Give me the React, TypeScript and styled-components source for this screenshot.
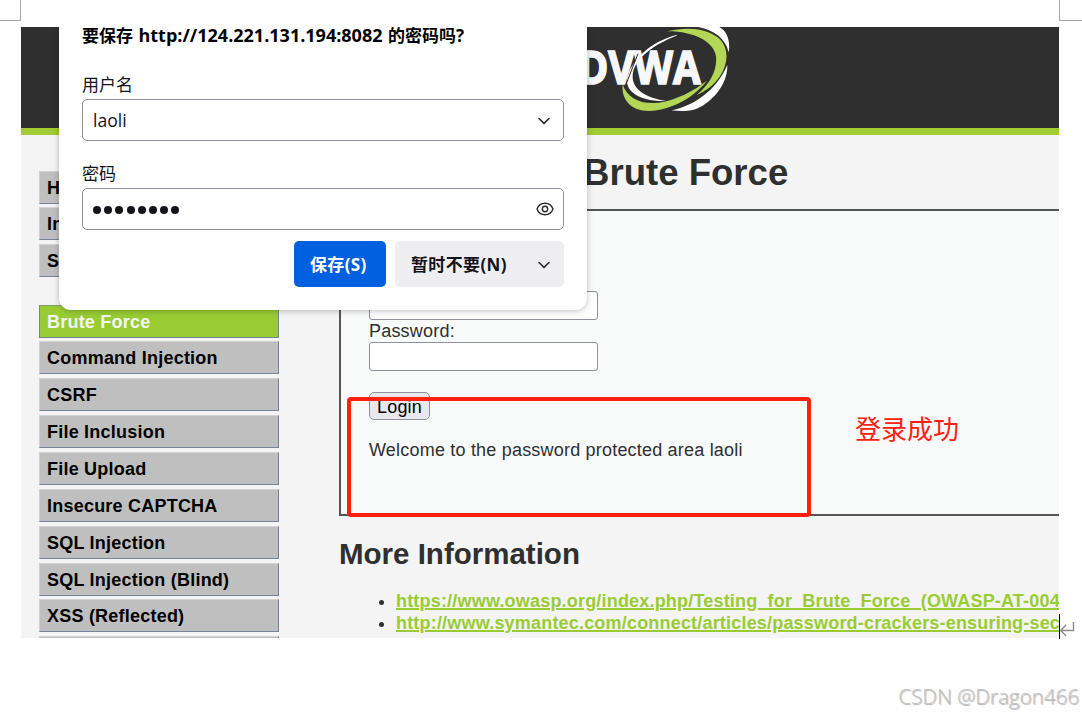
import React from 'react';
import styled, { createGlobalStyle } from 'styled-components';

const GlobalStyle = createGlobalStyle`
  * {
    box-sizing: border-box;
  }
  body {
    margin: 0;
    background: #FFFFFF;
    font-family: "Liberation Sans", "Noto Sans CJK SC", sans-serif;
  }
`
const Page = styled.div`
  display: flex;
  flex-direction: column;
  width: 1082px;
  height: 714px;
  overflow: hidden;
`
const CropMarks = styled.div`
  display: flex;
  justify-content: space-between;
  height: 27px;
`
const CropMark = styled.div<{ side: 'left' | 'right' }>`
  width: ${(props) => props.side === 'left' ? 21 : 23}px;
  height: 21px;
  border-bottom: 1px solid #A6A6A6;
  border-${(props) => props.side === 'left' ? 'right' : 'left'}: 1px solid #A6A6A6;
`
const Row = styled.div`
  display: flex;
  padding-left: 21px;
`
const Site = styled.div`
  position: relative;
  width: 1038px;
  height: 611px;
  overflow: hidden;
  background: #F4F4F4;
`
const Header = styled.div`
  height: 108px;
  padding-left: 549px;
  background: #2F2F2F;
  border-bottom: 7px solid #A1CC33;
`
const Columns = styled.div`
  display: flex;
`
const Sidebar = styled.div`
  flex: none;
  width: 318px;
  padding: 35.6px 60px 0 18px;
`
const MenuGroup = styled.div`
  display: flex;
  flex-direction: column;
  gap: 3.86px;
  margin-bottom: 27.2px;
`
const MenuItem = styled.div<{ selected?: boolean }>`
  flex: none;
  height: 33px;
  padding-left: 7px;
  border: 1px solid;
  border-color: ${(props) => props.selected ? '#7F9A6A #6F8796 #6F8796 #6F8796' : '#D2D2D2 #76849A #76849A #CFCFCF'};
  background: ${(props) => props.selected ? '#99CC33' : '#BFBFBF'};
  color: ${(props) => props.selected ? '#F4F4F4' : '#000000'};
  font-weight: bold;
  font-size: 18px;
  line-height: 32px;
  letter-spacing: 0.22px;
  white-space: nowrap;
`
const Main = styled.div`
  flex: 1;
  min-width: 0;
  overflow: hidden;
`
const Title = styled.h1`
  margin: 0;
  height: 74px;
  padding-left: 244px;
  color: #2F2F2F;
  font-size: 36.6px;
  line-height: 76px;
  white-space: nowrap;
`
const Panel = styled.div`
  display: flex;
  flex-direction: column;
  align-items: flex-start;
  height: 307px;
  padding: 80px 28px 0;
  border: 2px solid #555555;
  border-right: 0;
  background: #F8FAF9;
  color: #2F2F2F;
  font-size: 18px;
  line-height: 21px;
  letter-spacing: 0.2px;
`
const Field = styled.div`
  width: 229px;
  height: 29px;
  border: 1px solid #8F8F9D;
  border-radius: 3px;
  background: #FFFFFF;
`
const Label = styled.div`
  height: 22px;
  line-height: 23px;
`
const LoginButton = styled.div`
  width: 61px;
  height: 28px;
  margin: 21px 0 20px;
  border: 1px solid #8F8F9D;
  border-radius: 5px;
  background: #E9E9ED;
  color: #000000;
  line-height: 29px;
  text-align: center;
`
const SubTitle = styled.h2`
  margin: 0;
  padding-top: 20px;
  height: 74px;
  color: #2F2F2F;
  font-size: 29.5px;
  line-height: 36px;
`
const Links = styled.ul`
  margin: 0;
  padding-left: 57px;
  color: #2F2F2F;
  font-size: 18px;
  line-height: 22px;
  white-space: nowrap;
`
const Link = styled.span`
  color: #99CC33;
  font-weight: bold;
  letter-spacing: 0.19px;
  text-decoration: underline;
  text-decoration-thickness: 2px;
`
const Highlight = styled.div`
  position: absolute;
  left: 326px;
  top: 370px;
  width: 464px;
  height: 120px;
  border: 4px solid #FF2010;
  border-radius: 4px;
`
const Note = styled.div`
  position: absolute;
  left: 834px;
  top: 381px;
  color: #FF2010;
  font-family: "Noto Sans CJK SC", sans-serif;
  font-size: 26px;
  line-height: 40px;
`
const Popup = styled.div`
  position: absolute;
  left: 38px;
  top: 0;
  width: 528px;
  height: 283px;
  padding: 0 23px;
  border-radius: 0 0 12px 12px;
  background: #FFFFFF;
  box-shadow: 0 1px 6px rgba(0, 0, 0, 0.25);
  color: #15141A;
  font-family: "Open Sans", "Noto Sans CJK SC", sans-serif;
  font-size: 17px;
`
const Question = styled.div`
  height: 46px;
  color: #000000;
  font-weight: bold;
  line-height: 16px;
  white-space: nowrap;
`
const Address = styled.span`
  font-size: 18px;
  margin: 0 1px;
`
const PopupLabel = styled.div`
  height: 26px;
  line-height: 24px;
`
const PopupField = styled.div`
  display: flex;
  align-items: center;
  justify-content: space-between;
  width: 482px;
  height: 42px;
  margin-bottom: 21px;
  padding: 0 12px 0 10px;
  border: 1px solid #8F8F9D;
  border-radius: 5px;
`
const UserName = styled.span`
  font-size: 17.6px;
`
const Fields = styled.div`
  height: 168px;
`
const Dots = styled.div`
  display: flex;
  gap: 3.2px;
  padding-top: 1px;
`
const Dot = styled.div`
  width: 8px;
  height: 8px;
  border-radius: 50%;
  background: #15141A;
`
const Buttons = styled.div`
  display: flex;
  justify-content: flex-end;
  gap: 9px;
`
const PopupButton = styled.div<{ primary?: boolean }>`
  display: flex;
  align-items: center;
  justify-content: space-between;
  width: ${(props) => props.primary ? 92 : 169}px;
  height: 46px;
  padding: 0 ${(props) => props.primary ? 15 : 13}px 1px 16px;
  border-radius: 5px;
  background: ${(props) => props.primary ? '#0060DF' : '#EEEEF1'};
  color: ${(props) => props.primary ? '#FFFFFF' : '#15141A'};
  font-weight: bold;
  letter-spacing: 0.35px;
  white-space: nowrap;
`
const Cursor = styled.div`
  display: flex;
  align-items: flex-end;
  height: 612px;
`
const Caret = styled.div`
  width: 1px;
  height: 25px;
  background: #000000;
`
const Watermark = styled.div`
  margin-top: 42px;
  padding-right: 3px;
  color: #C3C3C3;
  font-family: "Open Sans", sans-serif;
  font-weight: 300;
  font-size: 20.6px;
  line-height: 30px;
  text-align: right;
  text-shadow: 1px 1px 1px #B0B0B0;
`
const pages = ['Home', 'Instructions', 'Setup'];
const attacks = [
  'Brute Force', 'Command Injection', 'CSRF', 'File Inclusion', 'File Upload',
  'Insecure CAPTCHA', 'SQL Injection', 'SQL Injection (Blind)', 'XSS (Reflected)', ''
];
const links = [
  'https://www.owasp.org/index.php/Testing_for_Brute_Force_(OWASP-AT-004)',
  'http://www.symantec.com/connect/articles/password-crackers-ensuring-security'
];

const Logo = () => (
  <svg width="160" height="100" viewBox="0 36 480 300" style={{ display: 'block' }}>
    <path d="M320 60C255 76 195 120 174 180C158 226 205 260 288 258C225 248 185 222 188 180C192 130 255 86 320 62Z" fill="#FFFFFF" />
    <path d="M385 36H448C470 48 482 75 476 112C466 70 435 47 385 36Z" fill="#FFFFFF" />
    <path d="M472 150C473 195 445 243 398 272C370 289 340 290 304 286C370 273 438 228 472 150Z" fill="#FFFFFF" />
    <text x="26" y="207" textLength="366" lengthAdjust="spacingAndGlyphs" fill="#F7F8FB" stroke="#F7F8FB" strokeWidth="5" fontFamily="Open Sans" fontWeight="700" fontSize="137">DVWA</text>
    <path d="M204 116L168 208" stroke="#2F2F2F" strokeWidth="3" />
    <path d="M292 49C350 34 410 40 443 67C478 96 476 145 450 184C431 212 407 229 380 240C425 203 442 160 438 124C432 80 370 48 292 49Z" fill="#B4D657" />
    <path d="M158 207C170 250 215 270 266 263C320 255 370 228 411 197C370 250 300 286 237 288C182 288 153 253 158 207Z" fill="#B4D657" />
  </svg>
)
const Chevron = () => (
  <svg width="14" height="14" viewBox="0 0 14 14" fill="none" stroke="#2B2A33" strokeWidth="1.6" strokeLinecap="round" strokeLinejoin="round">
    <path d="M2 5.5L7 10.3L12 5.5" />
  </svg>
)
const Eye = () => (
  <svg width="18" height="14" viewBox="0 0 18 14" fill="none" stroke="#2B2A33" strokeWidth="1.4" style={{ marginRight: -3 }}>
    <path d="M1 7C2.3 3.5 5.3 1.2 9 1.2S15.7 3.5 17 7C15.7 10.5 12.7 12.8 9 12.8S2.3 10.5 1 7Z" />
    <circle cx="9" cy="7" r="2.7" />
  </svg>
)
const ReturnMark = () => (
  <svg width="15" height="17" viewBox="0 0 15 17" fill="none" stroke="#8C8C8C" strokeWidth="1.4">
    <path d="M13.5 0V8.5H0.8M6 3L0.8 8.5L6 14" />
  </svg>
)

const SavePassword = () => (
  <Popup>
    <Question>要保存 <Address>http://124.221.131.194:8082</Address> 的密码吗?</Question>
    <Fields>
      <PopupLabel>用户名</PopupLabel>
      <PopupField>
        <UserName>laoli</UserName>
        <Chevron />
      </PopupField>
      <PopupLabel>密码</PopupLabel>
      <PopupField>
        <Dots>
          { Array.from({ length: 8 }, (_, i) => <Dot key={i} />) }
        </Dots>
        <Eye />
      </PopupField>
    </Fields>
    <Buttons>
      <PopupButton primary>保存(S)</PopupButton>
      <PopupButton>
        <span>暂时不要(N)</span>
        <Chevron />
      </PopupButton>
    </Buttons>
  </Popup>
)

export default class App extends React.Component {
  render() {
    const pageItems = pages.map((name) => <MenuItem key={name}>{ name }</MenuItem>);
    const attackItems = attacks.map((name, i) => (
      <MenuItem key={name} selected={i === 0}>{ name }</MenuItem>
    ));

    return (
      <Page>
        <GlobalStyle />
        <CropMarks>
          <CropMark side="left" />
          <CropMark side="right" />
        </CropMarks>
        <Row>
          <Site>
            <Header><Logo /></Header>
            <Columns>
              <Sidebar>
                <MenuGroup>{ pageItems }</MenuGroup>
                <MenuGroup>{ attackItems }</MenuGroup>
              </Sidebar>
              <Main>
                <Title>Brute Force</Title>
                <Panel>
                  <Field />
                  <Label>Password:</Label>
                  <Field />
                  <LoginButton>Login</LoginButton>
                  <div>Welcome to the password protected area laoli</div>
                </Panel>
                <SubTitle>More Information</SubTitle>
                <Links>
                  { links.map((url) => <li key={url}><Link>{ url }</Link></li>) }
                </Links>
              </Main>
            </Columns>
            <Highlight />
            <Note>登录成功</Note>
            <SavePassword />
          </Site>
          <Cursor>
            <Caret />
            <ReturnMark />
          </Cursor>
        </Row>
        <Watermark>CSDN @Dragon466</Watermark>
      </Page>
    )
  }
}
